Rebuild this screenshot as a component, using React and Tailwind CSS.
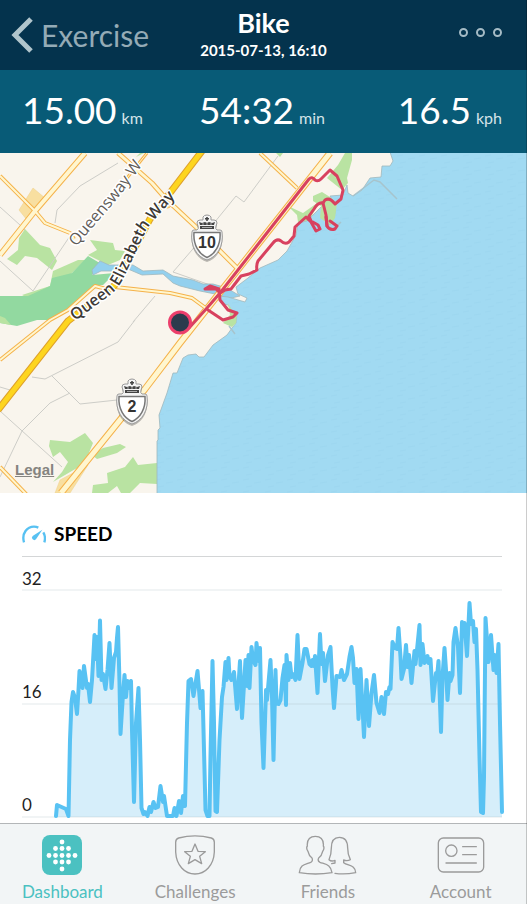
const SPEED_LINE = [
  "34,226 35,215 44,219 46.5,226 48,150 49.5,112 51,102 53,108 55,124 56.5,100 57.5,81 60.5,98 62,76 65,98 66,94 68,112",
  "70,90 72.5,45 73.5,69 75,47 76.5,86 78,30.5 79.5,90 81,84 83.5,99 85.5,80 87.5,53 89.5,98 92,68 94,62 95,48 96,37",
  "97.5,93 98.5,144 100.5,112 102.5,85 104,107 105.5,91 107,98 109,91 110,140 112,212 114,133 116.5,98 118,150",
  "119.5,218 121.5,224 123,222 125.5,226 127.5,217 129,222 131.5,212 133.5,218 136,217 138.5,196 141,212 142,206",
  "145,226 151,226 152.5,218 154.5,226 157,211 159,223 161,206 163,216 165,133 166.5,91 169,89 171.5,106 175.5,81",
  "178.5,118 180.5,101 181.5,140 183.5,220 185.5,226 187.5,226 188.5,166 190.5,71 192,133 193.5,221 195,222 197.5,150",
  "200,107 201.5,97 203.5,72 204.5,90 206.5,68 207.5,86 209.5,90 212,82 215,119 218,71 220,128 223.5,70 225,96",
  "226.5,65 227.5,98 229.5,57 231,70 233.5,75 234.5,53 236.5,71 238,58 239.5,133 241.5,178 244,100 245,110 248.5,70",
  "250,107 251.5,170 253.5,80 254.5,113 256.5,114 258.5,110 260.5,88 262.5,75 264,115 264.5,65 266.5,90 268,73 269.5,87",
  "271,84 273.5,90 275.5,45 277.5,89 280.5,73 282.5,59 284.5,59 287.5,74 289.5,76 290.5,70 292,76 293,66 295.5,103",
  "298,44 299.5,74 301,63 303,91 306,65 308.5,57 310.5,97 312,118 314.5,86 318,87 319.5,80 322,90 325,84 327.5,67",
  "329.5,57 331,68 332.5,93 334.5,79 336.5,129 338.5,79 342,147 344.5,90 347,136 349.5,103 352,85 354.5,113 357.5,123",
  "359.5,107 362,124 364,102 366,104 367.5,97 368.5,99 370.5,52 373,58 375,59 376.5,38 378.5,67 379.5,89 382,79 384,55",
  "385.5,77 387,65 389.5,93 392.5,61 393.5,74 395.5,55 397.5,35 398.5,75 400.5,54 402.5,73 405.5,66 406.5,73 408.5,69",
  "411,111 414,83 415,87 416.5,71 419,142 420.5,87 422.5,58 424,80 425.5,110 427.5,83 428.5,91 430.5,85 431.5,52",
  "433.5,38 436,57 438,103 440,32 441,46 442.5,33 445,66 447.5,13 449,34 451,31 452.5,52 454,39 455.5,80 457.5,167",
  "459,222 461,223 462,187 463.5,28 466.5,72 469,45 471.5,80 472.5,65 474.5,83 476.5,54 478,133 480,222",
].join(" ");

const stats = [
  { value: "15.00", unit: "km", align: "text-left" },
  { value: "54:32", unit: "min", align: "text-center" },
  { value: "16.5", unit: "kph", align: "text-right" },
];

// main roads that share the cream fill and orange casing
const roads = [
  { d: "M85 0L35 58L0 102", width: 6 },
  { d: "M0 23L35 58L45 70L70 80L74 86", width: 4 },
  { d: "M118 0L152 30L167 47L197 75L237 115", width: 5 },
  { d: "M147 0L127 25", width: 3 },
  { d: "M330 0L180 190L145 236L61 340", width: 7 },
  { d: "M260 0L297 35", width: 4 },
  { d: "M115 134L170 140L192 145L207 156", width: 4 },
  { d: "M0 207L50 167L68 157L95 133L110 137", width: 4 },
  { d: "M0 314L27 342", width: 4 },
];

const SHIELD_OUTLINE =
  "M-15 16Q-15 14 -13 14H-10Q-8 13 -9 10L-10 7Q-10 4 -7 4H-4V1Q-3 -1 0 -1Q3 -1 4 1V4H7Q10 4 10 7L9 10Q8 13 10 14H13Q15 14 15 16C17 30 10 41 0 44C-10 41 -17 30 -15 16Z";

function Header() {
  return (
    <header className="grid h-[70px] grid-cols-[1fr_auto_1fr] bg-[#04334d] text-white">
      <button type="button" className="flex items-center gap-2 pl-[11px] text-[30px] leading-none font-normal text-[#94abb6]">
        <svg viewBox="0 0 22 36" className="h-9 w-[22px]" fill="none" stroke="#b0c5cc" strokeWidth="5">
          <path d="M20 2L4 18L20 34" />
        </svg>
        Exercise
      </button>
      <div className="pt-[7px] text-center">
        <h1 className="text-[27px] leading-8 font-bold">Bike</h1>
        <p className="text-[15px] leading-[22px] font-bold">2015-07-13, 16:10</p>
      </div>
      <button type="button" aria-label="More options" className="mr-[25px] flex items-center justify-end gap-2 pb-1.5">
        {[0, 1, 2].map((dot) => (
          <span key={dot} className="size-[9px] rounded-full border-2 border-[#a5bbc5]" />
        ))}
      </button>
    </header>
  );
}

function Stats() {
  return (
    <div className="grid h-[83px] grid-cols-3 items-center bg-[#085b77] pr-[25px] pb-0.5 pl-[22px] text-white">
      {stats.map((stat) => (
        <p key={stat.unit} className={`whitespace-nowrap ${stat.align}`}>
          <span className="text-[37px] leading-none font-normal">{stat.value}</span>
          <span className="ml-[5px] text-base font-normal text-[#d5e4e9]">{stat.unit}</span>
        </p>
      ))}
    </div>
  );
}

function RoadShield({ x, y, number }) {
  return (
    <g transform={`translate(${x} ${y})`}>
      <path d={SHIELD_OUTLINE} fill="#00000040" transform="translate(0 2)" />
      <path d={SHIELD_OUTLINE} fill="#f4f4f4" stroke="#9a9a9a" strokeWidth="1" />
      <path d="M-8 6L-5 7L-2 6L0 7L2 6L5 7L8 6L7 9H-7ZM-7 10H7V13H-7ZM-0.800 1H0.800V5H-0.800ZM-2 2H2V3.500H-2Z" fill="#444" />
      <path d="M-5 8H-3M-1 8H1M3 8H5M-5 11.500H5" stroke="#aaa" strokeWidth="1" />
      <path d="M-13 16.500H13C14 29 8 38 0 41.500C-8 38 -14 29 -13 16.500Z" fill="#fff" stroke="#777" strokeWidth="1.500" />
      <text x="0" y="32" textAnchor="middle" fontSize="16" fontWeight="700" fill="#333">{number}</text>
    </g>
  );
}

function RouteMap() {
  return (
    <div className="relative font-['Liberation_Sans',Arial,sans-serif]">
      <svg viewBox="0 0 527 340" className="block w-full bg-[#f9f5ed]" role="img" aria-label="Route map">
        <defs>
          <pattern id="ripples" width="22" height="12" patternUnits="userSpaceOnUse">
            <rect width="22" height="12" fill="#a1daf2" />
            <path d="M1 3L7 2M12 6L19 5M4 10L10 9" stroke="#9dd7f0" strokeWidth="1" />
          </pattern>
          <path id="queensway" d="M76 94L112 52Q124 38 146 7" />
          <path id="qew" d="M75 168L105 146Q116 139 122 128L147 76Q153 67 182 37" />
        </defs>

        <g fill="#b9e3a2">
          <path d="M25 76L40 92L50 95L57 108L52 117L37 105L25 103L17 112L7 106L18 97L19 85Z" />
          <path d="M90 87L113 90L115 97L125 98L120 107L108 112L88 102L97 97Z" />
          <path d="M53 118L78 107L85 107L72 120L52 135L28 145L22 142L50 133Z" />
          <path d="M345 0H352V7L347 25L348 30L342 37L327 25L338 12Z" />
          <path d="M276 0H283L280 4Z" />
          <path d="M288 53L303 60L320 48L310 66L307 68L298 69L297 62Z" />
          <path d="M136 4L140 0H144Z" />
          <path d="M50 287L70 289L85 280L93 290L88 302L77 315L53 329L62 319L68 309L60 299L53 304L49 293Z" />
          <path d="M92 302L103 295L120 291L126 294L117 300L97 306Z" />
          <path d="M92 340L93 332L108 330L107 320L125 314L133 304L138 312L157 310V331L140 330L130 340H121L117 333L108 340Z" />
        </g>
        <path d="M0 143H28L50 133L52 125L72 120L88 103L103 112L92 122L115 120L103 132H95L68 157L50 167L37 167L17 173L0 170Z" fill="#92d9a0" />
        <path d="M0 163L5 165L11 172L0 170Z" fill="#b9e3a2" />
        <path d="M19 57L33 35L45 45L27 67ZM55 340L60 327L88 312L70 340Z" fill="#f8dfa0" stroke="#eed08c" strokeWidth="0.500" />

        <g fill="none" stroke="#cdcdc8" strokeWidth="1">
          <path d="M118 10L80 33L57 57L55 70M0 54L20 72L25 77M72 80L33 138L0 108" />
          <path d="M278 3L244 49L236 43L192 97L173 119L213 133M155 143L133 169" />
          <path d="M135 167L118 189L45 226L32 224M52 223L80 251L117 247M70 240L50 250L22 278L0 324M0 258L62 314M0 234L10 237" />
        </g>

        <g stroke="#9fb7bd" strokeWidth="0.800">
          <path d="M93 122L92 117L100 108L109 112L133 112L143 118L163 117L173 123L193 127L203 131L213 131L227 135L240 143L227 146L220 142L200 138L180 133L173 130L163 121L142 122L128 116L113 118L101 118Z" fill="#93d0ee" />
          <path d="M390 -1L393 8L390 13L382 13L381 24L370 25L362 37L353 43L348 40L347 32L343 42L330 43L334 50L335 60L330 72L323 66L322 53L310 65L307 68L298 70L296 82L287 98L278 107L260 115L248 125L236 134L238 141L247 145L245 149L228 144L219 143L221 150L228 152L233 159L237 160L236 170L232 175L227 182L213 192L204 204L199 204L196 201L188 202L183 205L177 220L173 220L167 240L159 262L160 275L158 277V287L157 288V341H528V-1Z" fill="url(#ripples)" />
        </g>
        <path d="M313 43L322 39L330 44L337 50L335 65L330 72L320 65L321 53L313 48Z" fill="#b9e3a2" />
        <path d="M228 150L233 159L237 160L236 170L232 174L223 170L230 162Z" fill="#b9e3a2" />
        <path d="M353 43L374 27L380 29L397 46M334 76L341 69M229 173L235 181" fill="none" stroke="#a7c4cd" strokeWidth="1.500" />

        <g fill="none" stroke="#f5b24a" strokeLinejoin="round">
          {roads.map((road) => (
            <path key={road.d} d={road.d} strokeWidth={road.width} />
          ))}
        </g>
        <g fill="none" stroke="#fff6cf" strokeLinejoin="round">
          {roads.map((road) => (
            <path key={road.d} d={road.d} strokeWidth={road.width - 2} />
          ))}
        </g>
        <circle cx="167" cy="50" r="5" fill="#fbd9a0" stroke="#f5b24a" />
        <g fill="none" strokeLinejoin="round">
          <path d="M202 -2L150 66L115 132L68 168L-2 257" stroke="#dfa12b" strokeWidth="7" />
          <path d="M202 -2L150 66L115 132L68 168L-2 257" stroke="#fdd51f" strokeWidth="5" />
        </g>

        <g fill="none" stroke="#d8415f" strokeWidth="3" strokeLinecap="round" strokeLinejoin="round">
          <path d="M189 175L207 155L220 140L288 53L309 26Q312 23 315 27Q318 29 321 26L330 17L337 23L343 37L341 46L335 51Q330 44 325 47L323 50L326 62L327 73Q330 78 335 76L337 73L330 68" />
          <path d="M327 73L326 64M323 50Q318 49 314 56L309 63L311 68L318 72L320 76L316 78L311 69L306 64L295 74L294 83L289 89Q285 92 281 88Q277 85 273 90L258 108Q256 112 257 117L249 121L241 123L231 136L225 137L220 140L216 136L205 136L210 133L219 136L220 147L228 157L237 160L233 164L223 167L208 157" />
        </g>
        <circle cx="180" cy="169.500" r="10.500" fill="#2c3b4d" stroke="#ec3f6c" strokeWidth="3" />

        <RoadShield x={207} y={63} number="10" />
        <RoadShield x={132} y={227} number="2" />

        <g className="font-['Open_Sans','Noto_Sans',sans-serif]" fontSize="16" stroke="#fff" strokeWidth="3" strokeLinejoin="round" paintOrder="stroke">
          <text fill="#5f5c58" fontWeight="500"><textPath href="#queensway">Queensway W</textPath></text>
          <text fill="#3d3a36" fontWeight="600"><textPath href="#qew">Queen Elizabeth Way</textPath></text>
        </g>
      </svg>
      <a href="#legal" className="absolute bottom-[15px] left-[15px] text-[15px] leading-4 font-bold text-[#858480] underline">Legal</a>
    </div>
  );
}

function SpeedChart() {
  return (
    <section className="pr-[25px] pl-[22px]">
      <h2 className="flex h-16 items-center gap-2 border-b border-[#d4d6d7] pt-[19px] text-[19px] font-bold text-black">
        <svg viewBox="0 0 72 54" className="h-[18px] w-6" fill="none" stroke="#57c1f2" strokeWidth="7">
          <path d="M6 52C-2 24 16 5 36 5Q43 5 49 8M64 22Q72 36 67 52" />
          <path d="M61 14L42 43A7 7 0 1 1 32 33Z" fill="#57c1f2" stroke="none" />
        </svg>
        SPEED
      </h2>
      <div className="mt-[9px] grid text-[17px] leading-6 text-[#1f1f1f]">
        <svg viewBox="0 0 480 227" className="col-start-1 row-start-1 mt-6 w-full overflow-visible" role="img" aria-label="Speed over time">
          <polygon points={`${SPEED_LINE} 480,227 34,227`} fill="#d6eefa" />
          <path d="M0 0H480M0 114H480M0 227H480" stroke="#9fb3bd" strokeOpacity="0.200" strokeWidth="1.500" />
          <polyline points={SPEED_LINE} fill="none" stroke="#58c2f3" strokeWidth="4" strokeLinecap="round" strokeLinejoin="round" />
        </svg>
        <div className="col-start-1 row-start-1 flex flex-col justify-between pt-px">
          <span>32</span>
          <span>16</span>
          <span>0</span>
        </div>
      </div>
    </section>
  );
}

const logoDots = [
  [20, 7], [13.5, 13.5], [20, 13.5], [26.5, 13.5],
  [7, 20.500], [13.5, 20.500], [20, 20.500], [26.5, 20.500], [33, 20.500],
  [13.5, 27], [20, 27], [26.5, 27], [20, 34],
];

const tabs = [
  {
    label: "Dashboard",
    active: true,
    icon: (
      <svg viewBox="0 0 40 40" className="size-10">
        <rect width="40" height="40" rx="8" fill="#4bc1c1" />
        {logoDots.map(([cx, cy]) => (
          <circle key={`${cx}-${cy}`} cx={cx} cy={cy} r="2.400" fill="#fff" />
        ))}
      </svg>
    ),
  },
  {
    label: "Challenges",
    icon: (
      <svg viewBox="0 0 126 126" className="size-[42px]" fill="none" stroke="currentColor" strokeWidth="4" strokeLinejoin="round">
        <path d="M14 12Q63 -1 112 12Q121 15 121 25V54C119 94 94 120 63 120C32 120 7 94 5 54V25Q5 15 14 12Z" />
        <path d="M63 30L72 52L94 53L77 67L83 89L63 77L43 89L49 67L32 53L54 52Z" />
      </svg>
    ),
  },
  {
    label: "Friends",
    icon: (
      <svg viewBox="0 0 180 126" className="h-[42px] w-[60px]" fill="none" stroke="currentColor" strokeWidth="4" strokeLinejoin="round" strokeLinecap="round">
        <path d="M4 116C6 92 20 92 38 85C44 82 44 76 42 72C34 66 32 62 30 52C26 46 25 40 28 36C26 14 38 7 52 7C66 7 78 14 76 36C79 40 78 46 74 52C72 62 70 66 62 72C60 76 60 82 66 85C86 92 98 92 102 116Q52 124 4 116Z" />
        <path d="M101 89L111 87V79Q100 84 93 77Q100 62 100 42C100 18 112 10 124 10C138 10 149 18 149 42Q149 62 157 77Q148 82 137 78V86C150 96 172 92 173 116Q140 122 111 118" />
      </svg>
    ),
  },
  {
    label: "Account",
    icon: (
      <svg viewBox="0 0 142 108" className="h-9 w-12" fill="none" stroke="currentColor" strokeWidth="4" strokeLinecap="round">
        <rect x="3" y="3" width="136" height="102" rx="15" />
        <circle cx="42" cy="41" r="17" />
        <path d="M76 29H117M76 53H117M26 78H117" />
      </svg>
    ),
  },
];

function TabBar() {
  return (
    <nav className="mt-auto border-t border-[#b3b6b8] bg-[#f2f5f6]">
      <div className="-ml-1 grid h-20 grid-cols-4">
        {tabs.map((tab) => (
          <a
            key={tab.label}
            href={`#${tab.label.toLowerCase()}`}
            className={`flex flex-col items-center pt-[10px] text-[17px] leading-5 ${tab.active ? "text-[#4bc1c1]" : "text-[#9b9b9b]"}`}
          >
            <span className="flex h-[42px] items-center">{tab.icon}</span>
            <span className="mt-1.5">{tab.label}</span>
          </a>
        ))}
      </div>
    </nav>
  );
}

export default function App() {
  return (
    <div className="relative flex min-h-screen flex-col bg-white font-['Lato',sans-serif] after:absolute after:inset-y-0 after:right-0 after:w-px after:bg-black/20">
      <Header />
      <Stats />
      <RouteMap />
      <SpeedChart />
      <TabBar />
    </div>
  );
}
